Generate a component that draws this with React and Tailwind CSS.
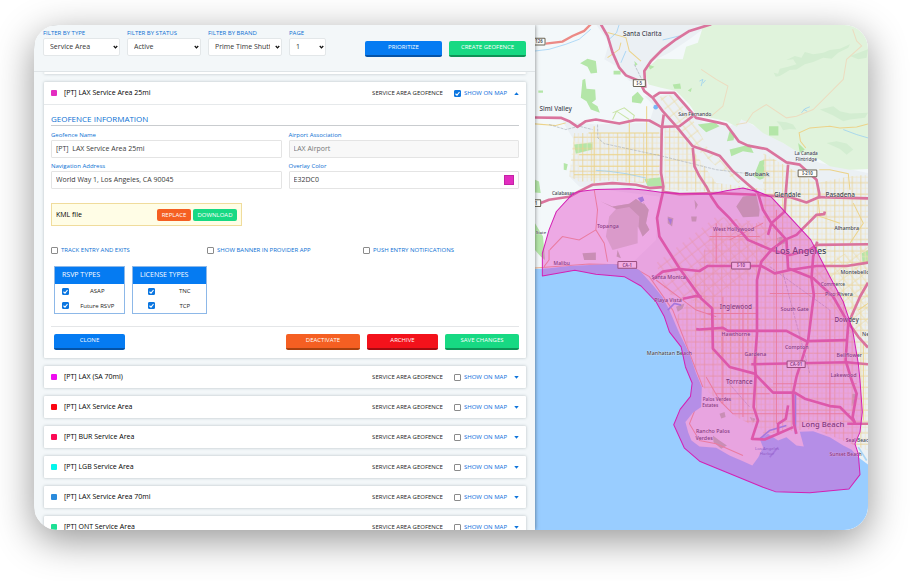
import { useId } from "react";

const FONT = "font-['Open_Sans','Noto_Sans',sans-serif]";

function Filter({ label, value, width }) {
  const id = useId();
  return (
    <div className={width}>
      <label htmlFor={id} className="block text-[6px] leading-[9px] font-medium text-[#0b70d3] whitespace-nowrap">
        {label}
      </label>
      <div className="relative">
        <select
          id={id}
          defaultValue={value}
          className="block w-full h-[18px] appearance-none rounded-[2px] border border-[#e3e7e9] bg-white pl-[6px] pr-[11px] text-[7px] leading-[14px] text-[#333]"
        >
          <option>{value}</option>
        </select>
        <svg viewBox="0 0 10 8" className="pointer-events-none absolute right-[2px] top-[7px] h-[4px] w-[5px]">
          <path d="M1.5 2 L5 5.8 L8.5 2" fill="none" stroke="#111" strokeWidth="2.6" />
        </svg>
      </div>
    </div>
  );
}

function Button({ tone, className = "", children }) {
  const tones = {
    blue: "bg-[#057bf2] border-[#0453a8]",
    green: "bg-[#17d983] border-[#0e9358]",
    orange: "bg-[#f55f22] border-[#a8410f]",
    red: "bg-[#f3121b] border-[#a30b10]",
  };
  return (
    <button
      type="button"
      className={`h-4 rounded-[2px] border-b-2 pb-[2px] text-center text-[6px] leading-[12px] font-medium text-white ${tones[tone]} ${className}`}
    >
      {children}
    </button>
  );
}

function Field({ label, value, disabled, swatch }) {
  const id = useId();
  return (
    <div>
      <label htmlFor={id} className="block text-[6px] leading-[9px] font-medium text-[#0b70d3]">
        {label}
      </label>
      <div
        className={`flex h-[18px] items-center rounded-[1px] border border-[#e4e4e4] px-[4px] ${disabled ? "bg-[#f8f8f8]" : "bg-white"}`}
      >
        <input
          id={id}
          defaultValue={value}
          disabled={disabled}
          className={`min-w-0 flex-1 bg-transparent text-[7px] leading-[14px] whitespace-pre ${disabled ? "text-[#777]" : "text-[#3a3a3a]"}`}
        />
        {swatch && <span className="size-[10px] border border-[#c324a5] bg-[#e32dc0]" />}
      </div>
    </div>
  );
}

function Tick({ checked, label }) {
  return (
    <span className="grid size-[7px] shrink-0">
      <input
        type="checkbox"
        aria-label={label}
        defaultChecked={checked}
        className="peer col-start-1 row-start-1 m-0 size-[7px] appearance-none rounded-[1px] border border-[#8b8b8b] bg-white checked:border-[#0b76e0] checked:bg-[#0b76e0]"
      />
      <svg viewBox="0 0 14 14" className="pointer-events-none invisible col-start-1 row-start-1 size-[7px] peer-checked:visible">
        <path d="M3 7.5 L6 10.2 L11 4" fill="none" stroke="#fff" strokeWidth="2.2" />
      </svg>
    </span>
  );
}

function Check({ label, checked, className = "" }) {
  return (
    <label className={`flex items-center gap-[3px] text-[6px] leading-[10px] font-medium whitespace-nowrap ${className}`}>
      <Tick checked={checked} />
      {label}
    </label>
  );
}

function CardHeader({ name, color, open }) {
  return (
    <div className="flex h-[22px] items-center px-[7px]">
      <span className={`size-[6px] rounded-[1px] ${color}`} />
      <h2 className="ml-[7px] flex-1 text-[7px] leading-[10px] font-medium text-black">{name}</h2>
      <span className="text-[6px] leading-[10px] text-[#222]">SERVICE AREA GEOFENCE</span>
      <Check label="SHOW ON MAP" checked={open} className="ml-[11px] text-[#0b6cdc]" />
      <button type="button" aria-label={open ? "Collapse" : "Expand"} className="ml-[7px] flex w-[5px] items-center">
        <svg viewBox="0 0 10 6" className="h-[3px] w-[5px]">
          <path d={open ? "M0.5 6 L5 0.5 L9.5 6Z" : "M0.5 0 L5 5.5 L9.5 0Z"} fill="#0d74dc" />
        </svg>
      </button>
    </div>
  );
}

function TypeTable({ title, items, width, tickWidth }) {
  return (
    <table className={`table-fixed border-collapse border border-[#8db8e8] text-[6px] ${width}`}>
      <colgroup>
        <col className={tickWidth} />
        <col />
      </colgroup>
      <thead>
        <tr className="h-[17px] bg-[#057bf2] text-left text-[7px] leading-[10px] text-white">
          <th colSpan={2} className="py-0 pl-[7px] font-medium">
            {title}
          </th>
        </tr>
      </thead>
      <tbody>
        {items.map((item) => (
          <tr key={item} className="h-[15px] leading-[10px] text-[#222]">
            <td className="p-0">
              <div className="flex justify-center">
                <Tick label={item} checked />
              </div>
            </td>
            <td className="p-0 pr-[6px] text-center whitespace-nowrap">{item}</td>
          </tr>
        ))}
      </tbody>
    </table>
  );
}

const CARDS = [
  ["[PT] LAX (SA 70mi)", "bg-[#ef0df0]"],
  ["[PT] LAX Service Area", "bg-[#fb0612]"],
  ["[PT] BUR Service Area", "bg-[#fb0a56]"],
  ["[PT] LGB Service Area", "bg-[#05f6ec]"],
  ["[PT] LAX Service Area 70mi", "bg-[#2a8bdc]"],
  ["[PT] ONT Service Area", "bg-[#1ee095]"],
];

const CARD = "shrink-0 rounded-[1px] bg-white shadow-[0_0_3px_rgba(60,80,90,0.35)]";

const OCEAN =
  "M18 777 L60 775 120 768 180 765 250 762 300 768 330 780 370 825 400 862 420 900 450 970 480 1030 500 1090 517 1130 515 1190 490 1207 468 1235 476 1265 486 1290 510 1308 560 1312 600 1335 640 1352 668 1365 686 1340 700 1310 690 1285 715 1270 745 1290 770 1280 800 1305 822 1308 810 1264 850 1262 900 1280 940 1305 965 1318 985 1340 1014 1362 V1560 H18Z";

const GEOFENCE =
  "M40 798 L40 730 60 660 82 605 130 553 150 545 200 539 300 537 345 541 400 548 450 551 545 553 590 543 640 535 685 546 725 562 843 690 900 800 940 875 968 960 985 1060 990 1110 997 1205 990 1265 975 1300 985 1330 990 1392 957 1435 840 1446 737 1443 700 1430 512 1353 465 1313 433 1243 452 1197 483 1158 488 1118 468 1070 455 1010 420 965 405 920 380 875 335 828 285 800 200 793 137 781Z";

const HIGHWAYS = [
  "M215 45 L235 80 250 130 270 175 290 198 330 215 345 245 370 265 400 305 440 350 490 410 535 425 570 438 610 485 650 520 685 550 700 600 725 640 770 690 775 775 850 805 910 860 950 930 985 980 1014 1012",
  "M545 45 L480 65 440 90 400 120 365 155 345 185 348 235",
  "M372 262 L390 250 435 250 470 290 500 325 570 340 590 345 628 396 655 408 710 418 770 458 810 465 860 510 868 550 868 566",
  "M18 324 L95 325 120 335 145 352 170 335 200 330 270 342 320 331 360 333 395 352 450 350 490 320",
  "M403 315 L397 360 395 490 402 530 400 550 383 625 390 680 450 775 515 865 548 895 550 1015 600 1070 675 1090 730 1147 795 1147 825 1165 900 1187 930 1190 975 1235",
  "M35 580 L60 570 120 561 150 545 190 525 250 520 320 525 360 535 402 532",
  "M400 546 L450 553 560 550 680 555",
  "M490 415 L495 470 510 500 530 530 545 560 565 590 600 625 655 690 725 720",
  "M370 808 L400 785 450 777 510 783 535 768 695 768 735 790 780 780 860 768 950 768 1014 758",
  "M775 465 L768 550 765 605 725 640 715 675",
  "M885 605 L883 613 860 615 800 675 765 690 725 720 695 755 682 810 682 970 675 1060 678 1090 672 1190 685 1230 667 1285 705 1287 745 1270 790 1250",
  "M685 555 L780 562 830 578 868 562 1014 566",
  "M725 720 L780 735 840 720 860 705 1014 703",
  "M862 695 L850 740 845 805 852 855 835 990 800 1100 790 1147 792 1240 800 1270",
  "M775 1185 L768 1225 745 1240 745 1270",
  "M500 957 L510 958 580 953 595 962 770 962 830 993 950 990",
  "M665 1062 L950 1056 1014 1062",
  "M1014 818 L990 860 955 940 947 1050 965 1110 980 1150 968 1220 975 1240",
  "M952 1240 H1014",
  "M460 866 L500 858 516 860",
];

const LABELS = [
  ["Santa Clarita", 339, 79, 19],
  ["Simi Valley", 80, 304, 19],
  ["San Fernando", 496, 318, 15],
  ["Calabasas", 102, 556, 14],
  ["Burbank", 682, 500, 18],
  ["La Canada", 829, 436, 14],
  ["Flintridge", 829, 455, 14],
  ["Glendale", 773, 563, 19],
  ["Pasadena", 931, 562, 19],
  ["Alhambra", 950, 659, 16],
  ["Topanga", 236, 653, 16],
  ["Malibu", 98, 765, 15],
  ["State", 36, 672, 12],
  ["West Hollywood", 612, 664, 16],
  ["Los Angeles", 813, 731, 27],
  ["Santa Monica", 418, 807, 16],
  ["Playa Vista", 416, 876, 16],
  ["Montebello", 975, 792, 16],
  ["Commerce", 909, 829, 14],
  ["Pico Rivera", 927, 859, 16],
  ["Inglewood", 619, 897, 19],
  ["South Gate", 795, 904, 16],
  ["Dowdey", 950, 935, 19],
  ["Hawthorne", 619, 976, 16],
  ["Compton", 801, 1016, 16],
  ["Manhattan Beach", 420, 1033, 16],
  ["Gardena", 677, 1038, 16],
  ["Bellflower", 958, 1040, 16],
  ["Ne", 1007, 978, 16],
  ["Torrance", 629, 1122, 19],
  ["Lakewood", 941, 1099, 16],
  ["Palos Verdes", 562, 1171, 14],
  ["Estates", 542, 1190, 14],
  ["Rancho Palos", 550, 1269, 16],
  ["Verdes", 524, 1288, 16],
  ["Long Beach", 879, 1249, 23],
  ["Seal Beach", 986, 1296, 15],
  ["Sunset Beach", 947, 1337, 15],
];

const SHIELDS = [
  ["126", 30, 97, 36],
  ["I-5", 330, 221, 36],
  ["I-210", 833, 491, 56],
  ["1", 21, 580, 28],
  ["CA-1", 294, 765, 56],
  ["I-10", 634, 767, 56],
  ["CA-91", 799, 1062, 54],
];

function Map() {
  return (
    <svg
      viewBox="18 45 996 1515"
      preserveAspectRatio="xMidYMid slice"
      role="img"
      aria-label="Map of Los Angeles with the geofence"
      className="absolute inset-0 h-full w-full font-['Noto_Sans',sans-serif]"
    >
      <defs>
        <pattern id="blocks" width="26" height="34" patternUnits="userSpaceOnUse">
          <path d="M5 0V34 M0 9H26" stroke="#ead08e" strokeWidth="2.4" fill="none" />
          <path d="M18 0V34 M0 26H26" stroke="#f0e2bd" strokeWidth="1.8" fill="none" />
        </pattern>
        <pattern id="diagonal" width="24" height="28" patternUnits="userSpaceOnUse" patternTransform="rotate(-38)">
          <path d="M5 0V28 M0 9H24" stroke="#ead9a0" strokeWidth="2" fill="none" />
        </pattern>
      </defs>
      <rect x="18" y="45" width="996" height="1515" fill="#f3f8fa" />
      <path
        d="M200 45 H540 L480 90 420 130 360 160 345 220 300 215 260 170 225 150 240 100Z M100 335 L200 345 360 340 375 290 345 260 370 262 440 250 520 340 600 350 640 330 760 400 870 460 1014 490 V1400 H480 L470 1230 515 1130 400 860 300 768 380 690 390 560 150 530 120 500 140 400Z"
        fill="#ebf0f4"
      />
      <path
        d="M522 45 L515 70 505 100 470 112 460 150 385 148 345 185 358 225 395 235 440 245 480 285 500 315 590 335 622 352 635 330 670 345 700 370 760 400 800 425 870 450 900 470 960 480 1014 478 V45Z"
        fill="#e0f3dc"
      />
      <g fill="#d3edd1">
        <path d="M732 190 L745 193 750 178 775 172 800 165 790 150 770 152 795 140 815 145 825 128 850 135 880 130 900 122 930 118 960 105 955 115 925 130 905 148 880 145 850 158 825 165 800 180 780 182 750 200 738 202Z" />
        <path d="M870 300 L910 290 930 305 960 312 1014 310 1005 325 960 330 940 335 910 318Z M740 335 L770 338 790 345 800 360 780 358 760 362 752 348Z M890 400 L920 395 950 402 970 420 950 435 930 418Z M960 140 L1000 125 1014 120 1010 145 985 150Z" />
      </g>
      <g fill="#b4e6a8">
        <path d="M153 162 L175 148 200 155 204 190 185 192 175 172Z M160 212 L168 208 172 238 198 240 200 270 188 280 205 290 212 310 185 300 172 275 155 265Z M253 184 H274 V195 H253Z M315 155 L325 165 318 170Z M355 165 L375 172 362 180Z M308 262 L325 247 343 268 335 282 308 278Z M430 225 L452 222 455 238 435 238Z M475 243 L487 235 484 248Z M505 345 L555 338 570 350 530 368Z M135 405 L190 398 190 420 140 432Z M104 460 L116 464 112 482 104 480Z M345 508 L400 502 400 530 355 530Z M28 243 H42 V250 H28Z" />
        <path d="M718 350 H746 V378 H718Z M600 365 L615 372 612 392 592 395Z M600 420 L660 405 672 430 640 425 605 440Z M690 455 L704 450 704 505 690 510 672 500Z M805 400 L825 420 810 430Z M18 510 L30 515 35 550 18 548Z M18 640 L42 680 48 750 35 740 18 720Z M995 730 L1014 720 1014 760 998 765Z" />
      </g>
      <g fill="#b9ccad">
        <path d="M215 575 L250 590 300 582 320 568 345 585 340 575 358 600 350 640 360 660 340 680 325 650 325 700 250 720 230 680 240 620 262 595Z" opacity=".55" />
        <path d="M215 575 L250 590 300 582 320 568 345 585 340 575 358 600 350 640 360 660 340 680 328 650 330 620 300 592 262 598Z M620 590 L640 560 680 555 690 600 688 620 640 622Z M415 620 L432 625 428 650 415 640Z M495 570 L505 585 498 600Z M485 620 L502 620 500 635 487 635Z M160 730 L200 728 200 750 165 750Z M265 720 L275 745 262 740Z M740 685 L755 680 768 700 750 705Z M570 1210 L585 1205 588 1220 575 1224Z M550 1275 L570 1290 592 1305 575 1315 552 1295Z M660 1220 L678 1225 670 1238Z M967 1150 H978 V1185 H965Z M440 890 L465 880 460 895 445 905Z" />
      </g>
      <path d="M135 370 H400 V500 L340 520 250 512 150 515 120 500Z" fill="url(#blocks)" />
      <path d="M405 350 H440 L560 520 720 540 500 545 405 540Z" fill="url(#blocks)" />
      <path d="M390 262 L435 255 490 330 540 425 620 490 640 530 560 470 480 400 410 310Z" fill="url(#diagonal)" />
      <path d="M700 430 L770 470 860 520 960 500 1014 495 V1320 L850 1255 700 1270 690 1060 560 1060 500 900 480 820 560 640 700 640Z" fill="url(#blocks)" />
      <path d="M500 850 L690 900 700 1260 620 1220 520 1130 500 1080 440 920Z" fill="url(#blocks)" />
      <path d="M380 760 L560 620 720 640 730 760 520 880 410 850Z" fill="url(#diagonal)" />
      <path d="M840 780 L1014 700 V960 L960 980Z" fill="url(#diagonal)" />
      <g fill="none" stroke="#ecd38a" strokeWidth="3">
        <path d="M195 350 V520 M300 340 V520 M352 290 V520 M178 370 H390 M150 435 H390 M150 470 H390 M135 495 H390 M18 343 L80 348 110 340 M235 70 L290 85 300 125 335 155 M235 145 L270 120 275 100" />
        <path d="M1014 343 L980 352 930 355 900 350 840 355 808 370 812 395 828 415 M868 480 H900 L955 492 960 540 M865 570 L870 620 930 640 M970 580 L1000 640 960 700 M985 900 L1014 880 M1000 1000 L1000 1230" />
        <path d="M250 310 L285 295 315 318 310 335 M250 330 L262 305 300 330" stroke="#c9e4a6" />
      </g>
      <g fill="none" stroke="#ecdcc0" strokeWidth="3">
        <path d="M968 60 L980 95 995 110 950 150 940 210 900 250 850 300 800 320 770 325 710 285 670 310 650 340 620 345 M515 180 L560 210 595 230 580 290 545 320" />
      </g>
      <g fill="none" stroke="#eeae8c" strokeWidth="3">
        <path d="M195 540 L205 600 200 660 225 700 235 755 M62 720 L100 680 150 690 200 660 M45 770 L60 750 60 720 M18 774 L180 762 300 765 360 800 430 900 500 1080 520 1130 M380 810 L500 900 560 920" />
        <path d="M530 1100 L570 1170 610 1210 790 1210 M500 1190 L480 1240 510 1290 560 1300 640 1335 M600 690 L700 640 M560 640 L560 760 M540 680 H690 M580 860 V1180 M640 880 V1220 M740 600 V1240 M900 900 V1260 M530 910 H680 M560 1150 H720 M640 1210 H960 M730 1120 H980 M720 850 H940" />
      </g>
      <g fill="none" stroke="#9aa3ad" strokeWidth="1.6" strokeDasharray="9 3">
        <path d="M60 345 L110 360 150 350 190 360 M205 345 L206 385 225 402 400 440 560 480 720 500 M315 165 L340 215 M760 790 L840 1090 M720 770 L900 900 M590 1110 L660 1190" />
      </g>
      <g fill="none" stroke="#8ecbf5" strokeWidth="2">
        <path d="M18 125 L60 120 110 105 150 90 185 60 M270 45 L262 70 240 90 M200 482 L240 485 290 492 350 505 M510 215 L520 210 515 230 M520 222 L528 212 M815 310 L825 298 840 292 M822 300 L832 305 M940 360 L980 375 1014 385 M400 92 L450 80 M275 160 L290 125" />
      </g>
      <circle cx="379" cy="293" r="7" fill="#7ab9f7" />
      <path d="M325 565 L340 560 345 572 335 578Z M415 625 L428 628 424 645Z" fill="#83a4e8" />
      <path d={OCEAN} fill="#99cdff" />
      <g fill="none" stroke="#7fa6ee" strokeWidth="5">
        <path d="M797 1150 V1270 M690 1285 L720 1260 770 1245 M415 900 L435 880 455 885 M720 1340 L745 1310" />
      </g>
      <path d="M985 1310 L1010 1350" fill="none" stroke="#a9d6f5" strokeWidth="5" />
      <path d="M50 103 L100 97 130 80 165 65 185 45" fill="none" stroke="#ec8a85" strokeWidth="7" />
      <g fill="none" stroke="#da749d" strokeWidth="8" strokeLinejoin="round">
        {HIGHWAYS.map((d) => (
          <path key={d} d={d} />
        ))}
      </g>
      <g fill="#3d4450" textAnchor="middle">
        {SHIELDS.map(([text, x, y, w]) => (
          <g key={text}>
            <rect x={x - w / 2} y={y - 10} width={w} height="20" rx="2" fill="#fdfdf8" stroke="#6b6455" strokeWidth="3" />
            <text x={x} y={y + 5} fontSize="13" fontWeight="600">
              {text}
            </text>
          </g>
        ))}
        {LABELS.map(([text, x, y, size]) => (
          <text key={text} x={x} y={y} fontSize={size} fontWeight="500" stroke="#ffffff" strokeOpacity="0.6" strokeWidth="2" paintOrder="stroke">
            {text}
          </text>
        ))}
        <g fill="#5b7cc9" fontSize="13">
          <text x="712" y="1318">Los Angeles</text>
          <text x="712" y="1334">Harbor</text>
        </g>
      </g>
      <path d={GEOFENCE} fill="#e32dc0" fillOpacity="0.39" stroke="#d320b4" strokeWidth="3" strokeLinejoin="round" />
    </svg>
  );
}

export default function App() {
  return (
    <div className={`flex h-screen bg-white pt-[25px] pr-[42px] pb-[51px] pl-[34px] ${FONT}`}>
      <main className="grid min-w-0 flex-1 grid-cols-[501fr_333fr] overflow-hidden rounded-[24px] shadow-[0_10px_38px_rgba(0,0,0,0.42)]">
        <section className="relative z-10 flex min-h-0 min-w-0 flex-col overflow-hidden bg-[#f3f7f9] shadow-[0_0_4px_rgba(0,0,0,0.5)]">
          <header className="flex h-[47px] shrink-0 items-start justify-between border-b border-[#dfe4e7] px-[9px] pt-[4px]">
            <div className="flex gap-[7px]">
              <Filter label="FILTER BY TYPE" value="Service Area" width="w-[77px]" />
              <Filter label="FILTER BY STATUS" value="Active" width="w-[74px]" />
              <Filter label="FILTER BY BRAND" value="Prime Time Shuttle" width="w-[74px]" />
              <Filter label="PAGE" value="1" width="w-[37px]" />
            </div>
            <div className="flex gap-[7px] pt-[12px]">
              <Button tone="blue" className="w-[77px]">PRIORITIZE</Button>
              <Button tone="green" className="w-[77px]">CREATE GEOFENCE</Button>
            </div>
          </header>

          <div className="flex min-h-0 flex-1 flex-col gap-[8px] overflow-hidden pr-[9px] pl-[10px]">
            <div className={`h-[2px] ${CARD}`} />

            <article className={CARD}>
              <CardHeader name="[PT] LAX Service Area 25mi" color="bg-[#e32dc0]" open />
              <form className="border-t border-[#e6e9eb] px-[7px] pt-[8px] pb-[8px]">
                <h3 className="border-b border-[#c9cccf] text-[8px] leading-[12px] font-medium text-[#0b70d3]">
                  GEOFENCE INFORMATION
                </h3>
                <div className="mt-[5px] grid grid-cols-2 gap-x-[7px] gap-y-[4px]">
                  <Field label="Geofence Name" value="[PT]  LAX Service Area 25mi" />
                  <Field label="Airport Association" value="LAX Airport" disabled />
                  <Field label="Navigation Address" value="World Way 1, Los Angeles, CA 90045" />
                  <Field label="Overlay Color" value="E32DC0" swatch />
                </div>

                <div className="mt-[14px] flex h-[23px] w-[191px] items-center gap-[2px] border border-[#f0dc9c] bg-[#fffde6] px-[4px]">
                  <span className="flex-1 text-[7px] leading-[10px] font-medium text-black">KML file</span>
                  <button type="button" className="h-[12px] w-[34px] rounded-[2px] bg-[#f55f22] text-[6px] leading-[12px] text-white">
                    REPLACE
                  </button>
                  <button type="button" className="h-[12px] w-[44px] rounded-[2px] bg-[#17d983] text-[6px] leading-[12px] text-white">
                    DOWNLOAD
                  </button>
                </div>

                <div className="mt-[19px] grid grid-cols-3 text-[#0b70d3]">
                  <Check label="TRACK ENTRY AND EXITS" />
                  <Check label="SHOW BANNER IN PROVIDER APP" />
                  <Check label="PUSH ENTRY NOTIFICATIONS" />
                </div>

                <div className="mt-[11px] flex gap-[7px] pl-[3px]">
                  <TypeTable title="RSVP TYPES" items={["ASAP", "Future RSVP"]} width="w-[71px]" tickWidth="w-[22px]" />
                  <TypeTable title="LICENSE TYPES" items={["TNC", "TCP"]} width="w-[75px]" tickWidth="w-[37px]" />
                </div>

                <div className="mt-[12px] flex gap-[7px] border-t border-[#e4e6e8] pt-[7px] pl-[3px]">
                  <Button tone="blue" className="mr-auto w-[71px]">CLONE</Button>
                  <Button tone="orange" className="w-[74px]">DEACTIVATE</Button>
                  <Button tone="red" className="w-[71px]">ARCHIVE</Button>
                  <Button tone="green" className="w-[74px]">SAVE CHANGES</Button>
                </div>
              </form>
            </article>

            {CARDS.map(([name, color]) => (
              <article key={name} className={CARD}>
                <CardHeader name={name} color={color} />
              </article>
            ))}
          </div>
        </section>

        <section className="relative min-w-0 overflow-hidden">
          <Map />
        </section>
      </main>
    </div>
  );
}
